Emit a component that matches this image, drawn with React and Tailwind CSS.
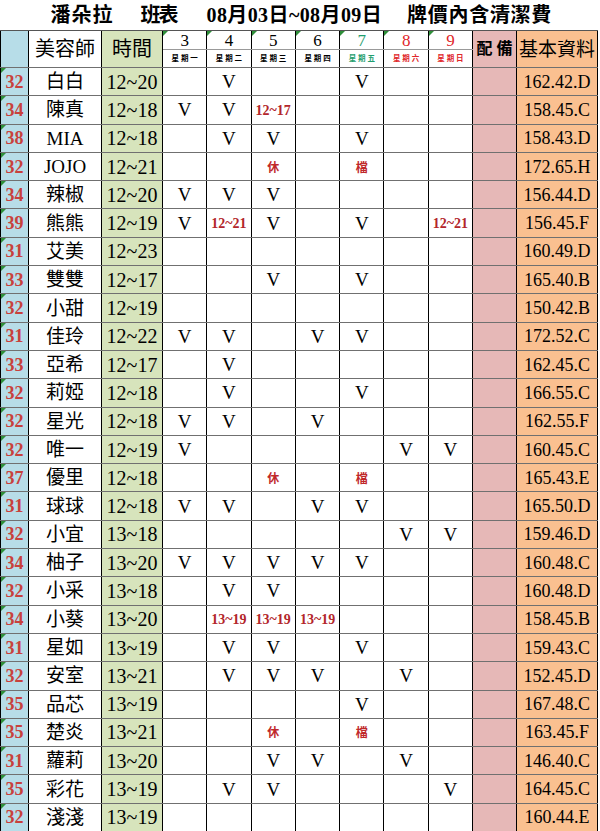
import React from 'react';

const rows = [
  ['32', '白白', '12~20', ['', 'V', '', '', 'V', '', ''], '162.42.D'],
  ['34', '陳真', '12~18', ['V', 'V', '12~17', '', '', '', ''], '158.45.C'],
  ['38', 'MIA', '12~18', ['', 'V', 'V', '', 'V', '', ''], '158.43.D'],
  ['32', 'JOJO', '12~21', ['', '', '休', '', '檔', '', ''], '172.65.H'],
  ['34', '辣椒', '12~20', ['V', 'V', 'V', '', '', '', ''], '156.44.D'],
  ['39', '熊熊', '12~19', ['V', '12~21', 'V', '', 'V', '', '12~21'], '156.45.F'],
  ['31', '艾美', '12~23', ['', '', '', '', '', '', ''], '160.49.D'],
  ['33', '雙雙', '12~17', ['', '', 'V', '', 'V', '', ''], '165.40.B'],
  ['32', '小甜', '12~19', ['', '', '', '', '', '', ''], '150.42.B'],
  ['31', '佳玲', '12~22', ['V', 'V', '', 'V', 'V', '', ''], '172.52.C'],
  ['33', '亞希', '12~17', ['', 'V', '', '', '', '', ''], '162.45.C'],
  ['32', '莉婭', '12~18', ['', 'V', '', '', 'V', '', ''], '166.55.C'],
  ['32', '星光', '12~18', ['V', 'V', '', 'V', '', '', ''], '162.55.F'],
  ['32', '唯一', '12~19', ['V', '', '', '', '', 'V', 'V'], '160.45.C'],
  ['37', '優里', '12~18', ['', '', '休', '', '檔', '', ''], '165.43.E'],
  ['31', '球球', '12~18', ['V', 'V', '', 'V', 'V', '', ''], '165.50.D'],
  ['32', '小宜', '13~18', ['', '', '', '', '', 'V', 'V'], '159.46.D'],
  ['34', '柚子', '13~20', ['V', 'V', 'V', 'V', 'V', '', ''], '160.48.C'],
  ['32', '小采', '13~18', ['', 'V', 'V', '', '', '', ''], '160.48.D'],
  ['34', '小葵', '13~20', ['', '13~19', '13~19', '13~19', '', '', ''], '158.45.B'],
  ['31', '星如', '13~19', ['', 'V', 'V', '', 'V', '', ''], '159.43.C'],
  ['32', '安室', '13~21', ['', 'V', 'V', 'V', '', 'V', ''], '152.45.D'],
  ['35', '品芯', '13~19', ['', '', '', '', 'V', '', ''], '167.48.C'],
  ['35', '楚炎', '13~21', ['', '', '休', '', '檔', '', ''], '163.45.F'],
  ['31', '蘿莉', '13~20', ['', '', 'V', 'V', '', 'V', ''], '146.40.C'],
  ['35', '彩花', '13~19', ['', 'V', 'V', '', '', '', 'V'], '164.45.C'],
  ['32', '淺淺', '13~19', ['', '', '', '', '', '', ''], '160.44.E'],
];

const days = [
  { n: '3', w: '星期一', c: 'text-black' },
  { n: '4', w: '星期二', c: 'text-black' },
  { n: '5', w: '星期三', c: 'text-black' },
  { n: '6', w: '星期四', c: 'text-black' },
  { n: '7', w: '星期五', c: 'text-[#1f9e6e]' },
  { n: '8', w: '星期六', c: 'text-[#e0262a]' },
  { n: '9', w: '星期日', c: 'text-[#e0262a]' },
];

const serif = { fontFamily: '"Liberation Serif", "Noto Sans CJK TC", serif' };

function Tri() {
  return (
    <span className="absolute left-0 top-0 w-0 h-0 border-t-[5px] border-t-[#2f8f3a] border-r-[5px] border-r-transparent" />
  );
}

function DayCell({ v }) {
  if (v === 'V') return <span className="text-[19px]">V</span>;
  if (v === '休' || v === '檔')
    return <span className="text-[12px] font-bold text-[#c0282a]">{v}</span>;
  if (v) return <span className="text-[14px] font-bold text-[#b3262b]">{v}</span>;
  return null;
}

export default function App() {
  const cell = 'border-x border-x-black border-y-[1.5px] border-y-[#707070] text-center p-0 leading-none';
  return (
    <div className="w-[600px] bg-white text-black" style={serif}>
      <table className="table-fixed border-collapse w-[597px]">
        <colgroup>
          <col className="w-[28px]" />
          <col className="w-[73px]" />
          <col className="w-[61px]" />
          {days.map((d) => (
            <col key={d.n} className="w-[44.3px]" />
          ))}
          <col className="w-[44px]" />
          <col className="w-[81px]" />
        </colgroup>
        <thead>
          <tr className="h-[28px]">
            <th colSpan={12} className="border-b-[1.5px] border-b-[#555] p-0">
              <div className="flex items-center pl-[50px] font-bold text-[20px] whitespace-nowrap">
                <span className="tracking-[1px]">潘朵拉</span>
                <span className="ml-[27px] tracking-[-2px]">班表</span>
                <span className="ml-[30px] tracking-[0.4px]">08月03日~08月09日</span>
                <span className="ml-[25px] tracking-[0.7px]">牌價內含清潔費</span>
              </div>
            </th>
          </tr>
          <tr className="h-[19px]">
            <th rowSpan={2} className={`${cell} bg-[#b7dde8]`} />
            <th rowSpan={2} className={`${cell} font-normal text-[20px]`}>美容師</th>
            <th rowSpan={2} className={`${cell} bg-[#d7e4bc] font-normal text-[20px]`}>時間</th>
            {days.map((d) => (
              <th key={d.n} className={`${cell} relative border-b border-b-[#999] font-normal text-[17px] ${d.c}`}>
                <Tri />
                {d.n}
              </th>
            ))}
            <th rowSpan={2} className={`${cell} bg-[#e6b8b7] font-bold text-[16px] whitespace-pre`}>{'配 備'}</th>
            <th rowSpan={2} className={`${cell} bg-[#fac090] font-normal text-[19px]`}>基本資料</th>
          </tr>
          <tr className="h-[18px]">
            {days.map((d) => (
              <th key={d.n} className={`${cell} border-t border-t-[#999] font-bold text-[7.5px] ${d.c}`}>
                {d.w.split('').join(' ')}
              </th>
            ))}
          </tr>
        </thead>
        <tbody>
          {rows.map(([num, name, time, marks, info]) => (
            <tr key={name} className="h-[28.3px]">
              <td className={`${cell} relative bg-[#b7dde8] text-[#c8413c] font-bold text-[18px]`}>
                <Tri />
                {num}
              </td>
              <td className={`${cell} text-[19px]`}>{name}</td>
              <td className={`${cell} bg-[#d7e4bc] text-[20px]`}>{time}</td>
              {marks.map((m, i) => (
                <td key={i} className={cell}>
                  <DayCell v={m} />
                </td>
              ))}
              <td className={`${cell} bg-[#e6b8b7]`} />
              <td className={`${cell} bg-[#fac090] text-[18px]`}>{info}</td>
            </tr>
          ))}
        </tbody>
      </table>
    </div>
  );
}
